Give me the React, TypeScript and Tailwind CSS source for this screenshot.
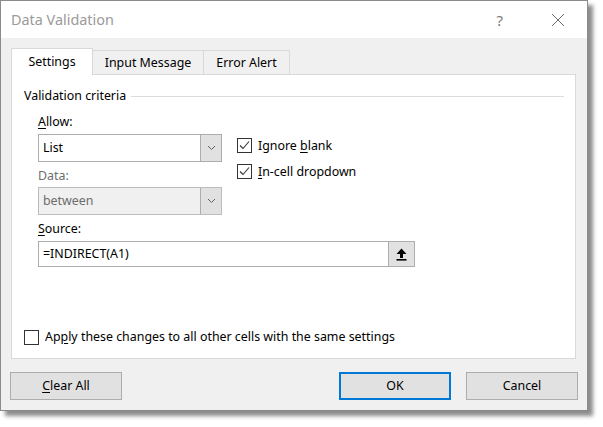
import React from 'react'

const ui = "font-['Noto_Sans',sans-serif]"

function Chevron() {
  return (
    <svg width="9" height="6" viewBox="0 0 9 6">
      <path d="M1 1 L4.5 4.5 L8 1" fill="none" stroke="#606060" strokeWidth="1" />
    </svg>
  )
}

function Checkbox({ checked }: { checked?: boolean }) {
  return (
    <span className="w-[15px] h-[15px] border border-[#333333] bg-white flex items-center justify-center shrink-0">
      {checked && (
        <svg width="13" height="13" viewBox="0 0 13 13">
          <path d="M2 6.5 L5 9.5 L11 2.5" fill="none" stroke="#333333" strokeWidth="1.1" />
        </svg>
      )}
    </span>
  )
}

function Combo({ value, disabled }: { value: string; disabled?: boolean }) {
  return (
    <div
      className={
        disabled
          ? 'flex h-[28px] w-[184px] border border-[#bcbcbc] bg-[#f0f0f0] text-[#6d6d6d]'
          : 'flex h-[28px] w-[184px] border border-[#adadad] bg-white text-black'
      }
    >
      <div className="flex-1 flex items-center pl-[4px]">{value}</div>
      <div className="w-[21px] border-l border-[#adadad] bg-[#e1e1e1] flex items-center justify-center">
        <Chevron />
      </div>
    </div>
  )
}

function Button({ children, primary }: { children: React.ReactNode; primary?: boolean }) {
  return (
    <button
      className={
        primary
          ? 'h-[28px] w-[112px] border-2 border-[#0078d7] bg-[#e1e1e1] text-black'
          : 'h-[28px] w-[112px] border border-[#adadad] bg-[#e1e1e1] text-black'
      }
    >
      {children}
    </button>
  )
}

export default function App() {
  return (
    <div className={`w-[603px] h-[427px] bg-white ${ui} text-[12.4px] leading-[16px] text-black`}>
      <div className="w-[588px] h-[411px] border border-[#8a8a8a] bg-[#f0f0f0] flex flex-col shadow-[5px_5px_4px_rgba(0,0,0,0.45)]">
        {/* title bar */}
        <div className="h-[37px] bg-white flex items-center pl-[10px] pr-[22px]">
          <span className="text-[14.4px] text-[#9a9a9a] flex-1">Data Validation</span>
          <span className="text-[15px] text-[#7a7a7a] mr-[48px]">?</span>
          <svg width="14" height="14" viewBox="0 0 14 14">
            <path d="M1 1 L13 13 M13 1 L1 13" stroke="#6a6a6a" strokeWidth="1" />
          </svg>
        </div>

        {/* tabs */}
        <div className="flex items-end pl-[10px] pr-[11px] mt-[10px]">
          <div className="h-[27px] w-[82px] bg-white border-l border-t border-r border-[#d9d9d9] flex items-center justify-center">
            Settings
          </div>
          <div className="h-[25px] w-[111px] border-t border-r border-b border-[#d9d9d9] flex items-center justify-center">
            Input Message
          </div>
          <div className="h-[25px] w-[86px] border-t border-r border-b border-[#d9d9d9] flex items-center justify-center">
            Error Alert
          </div>
          <div className="flex-1 border-b border-[#d9d9d9]" />
        </div>

        {/* panel */}
        <div className="ml-[10px] mr-[11px] h-[284px] bg-white border-l border-r border-b border-[#d9d9d9] flex flex-col pl-[12px] pr-[11px]">
          <div className="mt-[12px] h-[18px] flex items-center gap-[5px]">
            <span>Validation criteria</span>
            <div className="flex-1 h-px bg-[#dcdcdc]" />
          </div>

          <div className="pl-[14px] flex flex-col">
            <div className="flex gap-[15px]">
              <div className="flex flex-col">
                <div className="mt-[9px] h-[16px]">
                  <span className="underline underline-offset-2">A</span>llow:
                </div>
                <div className="mt-[4px]">
                  <Combo value="List" />
                </div>
                <div className="mt-[6px] h-[16px] text-[#6d6d6d]">Data:</div>
                <div className="mt-[3px]">
                  <Combo value="between" disabled />
                </div>
              </div>
              <div className="flex flex-col pt-[33px] gap-[11px]">
                <div className="flex items-center gap-[6px] h-[15px]">
                  <Checkbox checked />
                  <span>
                    Ignore <span className="underline underline-offset-2">b</span>lank
                  </span>
                </div>
                <div className="flex items-center gap-[6px] h-[15px]">
                  <Checkbox checked />
                  <span>
                    <span className="underline underline-offset-2">I</span>n-cell dropdown
                  </span>
                </div>
              </div>
            </div>

            <div className="mt-[6px] h-[16px]">
              <span className="underline underline-offset-2">S</span>ource:
            </div>
            <div className="mt-[4px] h-[26px] w-[377px] border border-[#adadad] flex">
              <div className="flex-1 flex items-center pl-[4px]">=INDIRECT(A1)</div>
              <div className="w-[26px] border-l border-[#adadad] bg-[#e1e1e1] flex items-center justify-center">
                <svg width="11" height="13" viewBox="0 0 11 13">
                  <path d="M5.5 0.5 L10.5 6 L7 6 L7 10 L4 10 L4 6 L0.5 6 Z" fill="#000" />
                  <rect x="0.5" y="11" width="10" height="1.6" fill="#000" />
                </svg>
              </div>
            </div>
          </div>

          <div className="mt-auto mb-[13px] flex items-center gap-[6px] h-[16px]">
            <Checkbox />
            <span>
              Ap<span className="underline underline-offset-2">p</span>ly these changes to all other cells with the same settings
            </span>
          </div>
        </div>

        {/* buttons */}
        <div className="flex items-center mt-[13px] pl-[9px] pr-[9px]">
          <Button>
            <span className="underline underline-offset-2">C</span>lear All
          </Button>
          <div className="flex-1" />
          <Button primary>OK</Button>
          <div className="w-[15px]" />
          <Button>Cancel</Button>
        </div>
      </div>
    </div>
  )
}
